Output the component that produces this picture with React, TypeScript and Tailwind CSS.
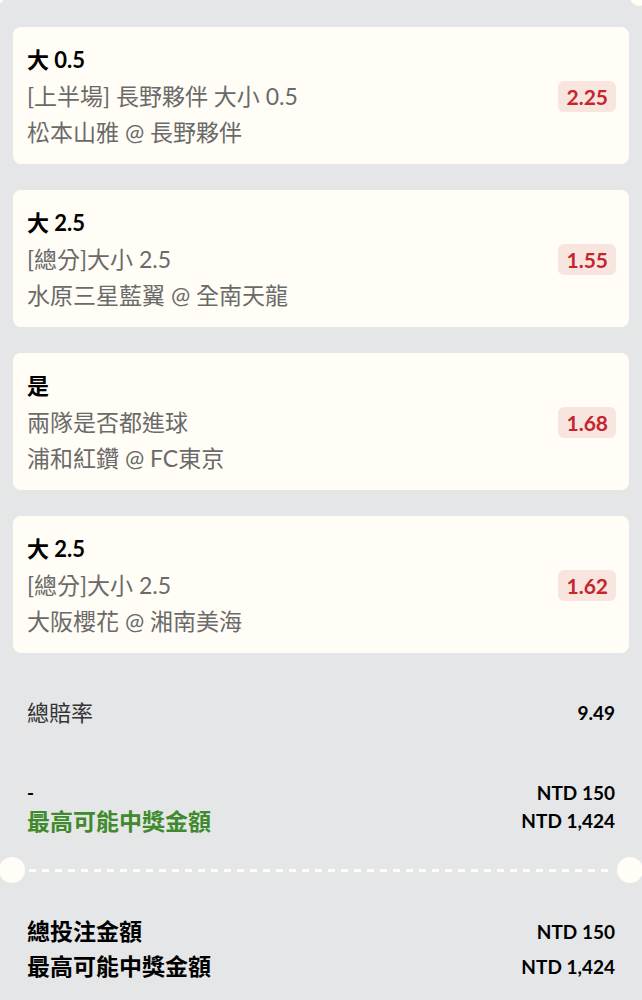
const font = { fontFamily: "Lato, 'Noto Sans CJK TC', 'Noto Sans', sans-serif" };

const bets = [
  { pick: "大 0.5", market: "[上半場] 長野夥伴 大小 0.5", match: "松本山雅 @ 長野夥伴", odds: "2.25" },
  { pick: "大 2.5", market: "[總分]大小 2.5", match: "水原三星藍翼 @ 全南天龍", odds: "1.55" },
  { pick: "是", market: "兩隊是否都進球", match: "浦和紅鑽 @ FC東京", odds: "1.68" },
  { pick: "大 2.5", market: "[總分]大小 2.5", match: "大阪櫻花 @ 湘南美海", odds: "1.62" },
];

const BetCard = ({ bet }: { bet: (typeof bets)[number] }) => (
  <div className="flex items-center justify-between rounded-lg bg-[#fffdf5] pl-[14px] pr-[13px] pt-[15px] pb-[14px]">
    <div className="flex flex-col leading-[36px]">
      <span className="text-[22px] font-bold text-black">{bet.pick}</span>
      <span className="text-[23px] text-[#6a6a6a]">{bet.market}</span>
      <span className="text-[23px] text-[#6a6a6a]">{bet.match}</span>
    </div>
    <span className="rounded-md bg-[#f8e5e0] px-[8px] py-[2px] text-[21px] font-bold leading-[27px] text-[#c4262b]">
      {bet.odds}
    </span>
  </div>
);

export default function App() {
  return (
    <div className="relative min-h-[1000px] overflow-hidden bg-[#e5e6e8]" style={font}>
      <div className="absolute -left-[10px] -top-[10px] h-[14px] w-[14px] rounded-full bg-[#fffdf5]" />
      <div className="absolute -right-[6px] -top-[12px] h-[18px] w-[18px] rounded-full bg-[#fffdf5]" />

      <div className="flex flex-col gap-[26px] px-[13px] pt-[27px]">
        {bets.map((bet, i) => (
          <BetCard key={i} bet={bet} />
        ))}
      </div>

      <div className="flex items-center justify-between px-[27px] pt-[45px]">
        <span className="text-[22px] leading-[30px] text-[#333]">總賠率</span>
        <span className="text-[19px] font-bold leading-[30px] text-black">9.49</span>
      </div>

      <div className="flex justify-between px-[27px] pt-[51px]">
        <div className="flex flex-col">
          <span className="text-[19px] font-bold leading-[28px] text-black">-</span>
          <span className="text-[23px] font-bold leading-[28px] text-[#3f8a2c]">最高可能中獎金額</span>
        </div>
        <div className="flex flex-col items-end text-[19px] font-bold leading-[28px] text-black">
          <span>NTD 150</span>
          <span>NTD 1,424</span>
        </div>
      </div>

      <div className="mt-[22px] flex items-center">
        <div className="-ml-[1px] h-[26px] w-[26px] shrink-0 rounded-full bg-[#fffdf5]" />
        <div className="mx-[4px] h-[3px] flex-1 bg-[repeating-linear-gradient(90deg,#fffdf5_0_7px,transparent_7px_13px)]" />
        <div className="-mr-[1px] h-[26px] w-[26px] shrink-0 rounded-full bg-[#fffdf5]" />
      </div>

      <div className="flex justify-between px-[27px] pt-[31px]">
        <div className="flex flex-col text-[23px] font-bold leading-[35px] text-black">
          <span>總投注金額</span>
          <span>最高可能中獎金額</span>
        </div>
        <div className="flex flex-col items-end text-[19px] font-bold leading-[35px] text-black">
          <span>NTD 150</span>
          <span>NTD 1,424</span>
        </div>
      </div>
    </div>
  );
}
